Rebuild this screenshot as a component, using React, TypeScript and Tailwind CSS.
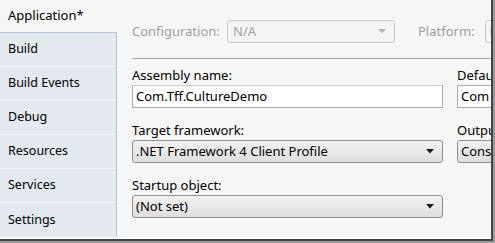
import React from "react";

const font = { fontFamily: '"Segoe UI", "Noto Sans", "Open Sans", sans-serif' };

function Arrow({ color = "#000" }: { color?: string }) {
  return (
    <svg width="8" height="5" viewBox="0 0 8 5">
      <path d="M0 0 L8 0 L4 4.5 Z" fill={color} />
    </svg>
  );
}

function Select({ text, w }: { text: string; w: string }) {
  return (
    <div
      className={`${w} h-[23px] rounded-[3px] border border-[#8e8f8f] bg-gradient-to-b from-[#f2f2f2] to-[#dedede] flex items-center pl-[3px] pr-[8px] justify-between`}
    >
      <span className="text-[13px] text-black leading-none">{text}</span>
      <Arrow color="#1a1a1a" />
    </div>
  );
}

export default function App() {
  const items = ["Build", "Build Events", "Debug", "Resources", "Services", "Settings"];
  return (
    <div className="w-[495px] h-[243px] bg-[#9a9a9a] overflow-hidden" style={font}>
      <div className="w-[493px] h-[241px] bg-[#444] pr-[2px] pb-[2px]">
        <div className="w-[491px] h-[239px] bg-[#f6f6f6] flex overflow-hidden border-b-2 border-white">
          {/* Sidebar */}
          <div className="w-[117px] flex flex-col shrink-0">
            <div className="h-[32px] flex items-center pl-[8px] text-[13px] text-black">Application*</div>
            <div className="flex-1 bg-[#e4e8ef] border-t border-r border-[#b9c2d0] flex flex-col">
              {items.map((it, i) => (
                <div
                  key={it}
                  className={`h-[34px] flex items-center pl-[8px] text-[12.5px] text-black ${i < items.length - 1 ? "border-b border-[#f0f2f6]" : ""}`}
                >
                  {it}
                </div>
              ))}
            </div>
          </div>
          {/* Content */}
          <div className="flex-1 flex flex-col pl-[15px] pt-[20px] overflow-hidden">
            <div className="flex items-center h-[23px] whitespace-nowrap">
              <span className="text-[13px] text-[#a0a0a0] w-[95px] shrink-0">Configuration:</span>
              <div className="w-[168px] shrink-0 h-[23px] rounded-[3px] border border-[#c8c8c8] bg-[#f4f4f4] flex items-center justify-between pl-[5px] pr-[8px]">
                <span className="text-[13px] text-[#a0a0a0]">N/A</span>
                <Arrow color="#b4b4b4" />
              </div>
              <span className="text-[13px] text-[#a0a0a0] ml-[23px] shrink-0">Platform:</span>
              <div className="ml-[10px] w-[40px] shrink-0 h-[23px] rounded-[3px] border border-[#c8c8c8] bg-[#f4f4f4] flex items-center pl-[4px]">
                <span className="text-[13px] text-[#a0a0a0]">N</span>
              </div>
            </div>
            <div className="h-px bg-[#a8a8a8] mt-[15px] w-[400px]" />
            <div className="flex gap-[14px] mt-[6px] whitespace-nowrap">
              <div className="flex flex-col w-[311px] shrink-0">
                <span className="text-[13px] text-black h-[20px] leading-[20px]">Assembly name:</span>
                <div className="h-[23px] border border-[#abadb3] border-t-[#c5cfe0] bg-white flex items-center pl-[3px] text-[13px]">
                  Com.Tff.CultureDemo
                </div>
                <span className="text-[13px] text-black mt-[12px] h-[20px] leading-[20px]">Target framework:</span>
                <Select text=".NET Framework 4 Client Profile" w="w-[311px]" />
                <span className="text-[13px] text-black mt-[12px] h-[20px] leading-[20px]">Startup object:</span>
                <Select text="(Not set)" w="w-[311px]" />
              </div>
              <div className="flex flex-col">
                <span className="text-[13px] text-black h-[20px] leading-[20px]">Default</span>
                <div className="h-[23px] border border-[#abadb3] bg-white flex items-center pl-[3px] text-[13px] w-[60px]">
                  Com
                </div>
                <span className="text-[13px] text-black mt-[12px] h-[20px] leading-[20px]">Output</span>
                <div className="h-[23px] rounded-[3px] border border-[#8e8f8f] bg-gradient-to-b from-[#f2f2f2] to-[#dedede] flex items-center pl-[3px] text-[13px] w-[60px]">
                  Console
                </div>
              </div>
            </div>
          </div>
        </div>
      </div>
    </div>
  );
}
